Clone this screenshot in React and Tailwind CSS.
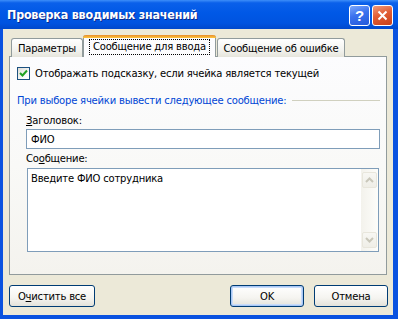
import React from "react";

function TitleBar() {
  return (
    <div className="h-[29px] shrink-0 flex items-center bg-[linear-gradient(180deg,#3d8ef9_0%,#0a60ea_10%,#0058e6_45%,#0053e0_80%,#0048cc_100%)] pl-[7px] pr-[5px]">
      <div className="flex-1 pt-[1px] font-['DejaVu_Sans_Condensed','Liberation_Sans',sans-serif] font-bold text-[12.4px] leading-[16px] text-white [text-shadow:1px_1px_0_#0c2a8c]">
        Проверка вводимых значений
      </div>
      <div className="flex gap-[2px] mt-[1px]">
        <div className="w-[21px] h-[21px] rounded-[3px] border border-white bg-[linear-gradient(160deg,#7ba7fb_0%,#3b72ee_45%,#2459da_100%)] flex items-center justify-center text-white font-['Liberation_Sans',sans-serif] font-bold text-[15px] leading-none">
          ?
        </div>
        <div className="w-[21px] h-[21px] rounded-[3px] border border-white bg-[linear-gradient(160deg,#f09a7c_0%,#e15d34_45%,#c8401a_100%)] flex items-center justify-center">
          <svg width="11" height="11" viewBox="0 0 11 11">
            <path d="M1.5 1.5 L9.5 9.5 M9.5 1.5 L1.5 9.5" stroke="#fff" strokeWidth="2" />
          </svg>
        </div>
      </div>
    </div>
  );
}

function Tabs() {
  const inactive =
    "h-[19px] border border-b-0 border-[#919b9c] rounded-t-[3px] bg-[linear-gradient(180deg,#ffffff_0%,#f3f3ef_60%,#e6e5dc_100%)] flex items-center justify-center";
  return (
    <div className="h-[22px] flex items-end pl-[2px] relative z-10 -mb-px">
      <div className={inactive + " w-[72px]"}>Параметры</div>
      <div className="w-[133px] h-[22px] border border-b-0 border-[#919b9c] border-t-0 rounded-t-[3px] bg-[#fcfcfe] flex flex-col">
        <div className="h-[3px] rounded-t-[3px] bg-[linear-gradient(180deg,#e68b2c_0%,#ffc73c_100%)] -mx-px"></div>
        <div className="flex-1 flex items-center justify-center pb-[1px]">
          <span className="border border-dotted border-black px-[3px] leading-[14px]">Сообщение для ввода</span>
        </div>
      </div>
      <div className={inactive + " w-[128px] ml-[1px]"}>Сообщение об ошибке</div>
    </div>
  );
}

function Checkbox() {
  return (
    <div className="w-[13px] h-[13px] shrink-0 border border-[#1c5180] bg-[linear-gradient(135deg,#dcdcd7_0%,#fbfbf9_70%,#ffffff_100%)] flex items-center justify-center">
      <svg width="9" height="9" viewBox="0 0 9 9">
        <path d="M1 4 L3.5 6.5 L8 1.5" stroke="#21a121" strokeWidth="2" fill="none" />
      </svg>
    </div>
  );
}

function ScrollBtn({ down }) {
  return (
    <div className="w-[15px] h-[16px] rounded-[2px] border border-[#e8e6dc] bg-[linear-gradient(180deg,#f7f7f3_0%,#efeee7_100%)] flex items-center justify-center">
      <svg width="9" height="6" viewBox="0 0 9 6">
        <path d={down ? "M1 1 L4.5 4.5 L8 1" : "M1 5 L4.5 1.5 L8 5"} stroke="#c9c7ba" strokeWidth="2" fill="none" />
      </svg>
    </div>
  );
}

function Panel() {
  return (
    <div className="h-[219px] border border-[#919b9c] bg-[linear-gradient(180deg,#fcfcfe_0%,#f9f9f7_50%,#f4f3ee_100%)] pl-[7px] pr-[6px] pt-[10px]">
      <div className="flex items-center gap-[5px]">
        <Checkbox />
        <span>Отображать подсказку, если ячейка является текущей</span>
      </div>
      <div className="mt-[14px] flex items-center">
        <span className="text-[#0046d5]">При выборе ячейки вывести следующее сообщение:</span>
        <div className="flex-1 h-px bg-[#d0d0bf] ml-[6px]"></div>
      </div>
      <div className="pl-[9px]">
        <div className="mt-[7px]">
          <span className="underline">З</span>аголовок:
        </div>
        <div className="mt-[2px] h-[20px] border border-[#7f9db9] bg-white flex items-center pl-[4px]">ФИО</div>
        <div className="mt-[3px]">
          Со<span className="underline">о</span>бщение:
        </div>
        <div className="mt-[3px] mx-px h-[84px] border border-[#7f9db9] bg-white flex">
          <div className="flex-1 pl-[3px] pt-[3px]">Введите ФИО сотрудника</div>
          <div className="w-[17px] bg-[linear-gradient(90deg,#f3f2ec_0%,#fdfdfa_100%)] flex flex-col justify-between items-center py-[3px]">
            <ScrollBtn />
            <ScrollBtn down />
          </div>
        </div>
      </div>
    </div>
  );
}

function Button({ children, w, primary }) {
  return (
    <div
      className={
        "h-[22px] rounded-[3px] border border-[#003c74] bg-[linear-gradient(180deg,#ffffff_0%,#f5f4f0_60%,#e3e2da_100%)] flex items-center justify-center " +
        w +
        (primary ? " shadow-[inset_0_0_0_1px_#a9c8f5,inset_0_0_0_2px_#c9dcf9]" : "")
      }
    >
      {children}
    </div>
  );
}

export default function App() {
  return (
    <div className="w-[398px] h-[319px] flex flex-col bg-[#0a52e0] font-['DejaVu_Sans',sans-serif] text-[10px] leading-[13px] tracking-[-0.2px] text-black">
      <TitleBar />
      <div className="flex-1 flex flex-col ml-[3px] mr-[5px] mb-[4px] bg-[#ece9d8] px-[6px] pt-[6px]">
        <Tabs />
        <Panel />
        <div className="mt-[10px] -mr-px flex items-center gap-[10px]">
          <Button w="w-[86px]">
            <span>
              О<span className="underline">ч</span>истить все
            </span>
          </Button>
          <div className="flex-1"></div>
          <Button w="w-[74px]" primary>
            OK
          </Button>
          <Button w="w-[74px]">Отмена</Button>
        </div>
      </div>
    </div>
  );
}
